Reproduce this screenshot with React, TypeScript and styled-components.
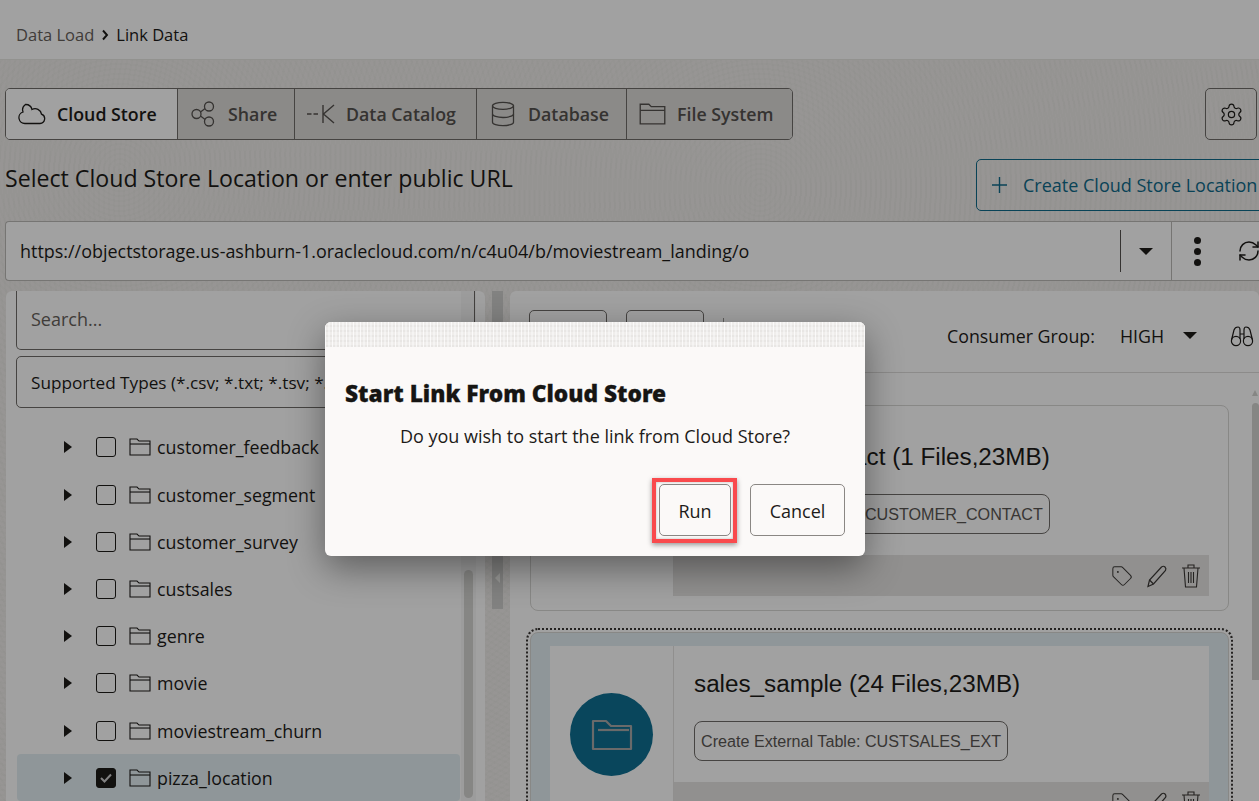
import styled, { createGlobalStyle } from 'styled-components';
import { Database, RefreshCw, Settings, Tag } from 'lucide-react';

const uiFont = '"Open Sans", "Noto Sans", "Liberation Sans", sans-serif';
const cardFont = '"Liberation Sans", Arial, sans-serif';
const teal = '#0f6a8a';

const folders = [
	'customer_feedback',
	'customer_segment',
	'customer_survey',
	'custsales',
	'genre',
	'movie',
	'moviestream_churn',
	'pizza_location',
];

const GlobalStyle = createGlobalStyle`
	html, body {
		margin: 0;
		height: 100%;
		overflow: hidden;
		font-family: ${uiFont};
		color: #1d1b19;
	}
	* {
		box-sizing: border-box;
	}
`;

const FolderGlyph = ({ size = 24 }: { size?: number }) => (
	<svg width={size} height={size * 0.82} viewBox='0 0 22 18' fill='none' stroke='currentColor' strokeWidth='1.1'>
		<path d='M1 1h7l2 2h11v14H1z' />
		<path d='M1 6h20' />
	</svg>
);

const CircleFolder = () => (
	<svg width='42' height='32' viewBox='0 0 42 32' fill='none' stroke='#a8a8a8' strokeWidth='2.2' strokeLinejoin='round'>
		<path d='M2 2h13l5 5h20v23H2z' />
		<path d='M7 11h31' />
	</svg>
);

const CardActions = () => (
	<ActionBar>
		<Tag size={22} strokeWidth={1.1} />
		<svg width='22' height='24' viewBox='0 0 22 24' fill='none' stroke='currentColor' strokeWidth='1.2'>
			<path d='M2 22.500 3.500 16 15.500 3q2-1.500 3.500 0t.5 3.500L7.500 20z' />
			<path d='M3.500 16l4 4' />
		</svg>
		<svg width='20' height='26' viewBox='0 0 20 26' fill='none' stroke='currentColor' strokeWidth='1.1'>
			<path d='M1 5h18M7 5V2h6v3M3 5l1.500 19h11L17 5M7.500 9v11M10 9v11M12.500 9v11' />
		</svg>
	</ActionBar>
);

const App = () => (
	<Page>
		<GlobalStyle />
		<Header>
			<Crumb>Data Load</Crumb>
			<svg width='8' height='12' viewBox='0 0 8 12' fill='none' stroke='#1d1b19' strokeWidth='1.9'>
				<path d='M2 1.500 6 6l-4 4.500' />
			</svg>
			<CrumbCurrent>Link Data</CrumbCurrent>
		</Header>

		<Toolbar>
			<Tabs>
				<Tab $active $width={171}>
					<svg width='28' height='22' viewBox='0 0 28 22' fill='none' stroke='currentColor' strokeWidth='1.3'>
						<path d='M7 20.500h15a4.800 4.800 0 0 0 1.500-9.300A6.500 6.500 0 0 0 14 6.500 6.500 6.500 0 0 0 7.500 1.500 6.500 6.500 0 0 0 5 9 5.900 5.900 0 0 0 7 20.500z' />
					</svg>
					Cloud Store
				</Tab>
				<Tab $width={117}>
					<svg width='27' height='26' viewBox='0 0 26 26' fill='none' stroke='currentColor' strokeWidth='1.3'>
						<circle cx='6' cy='13' r='4.500' />
						<circle cx='18.500' cy='5.500' r='4.500' />
						<circle cx='18.500' cy='20.500' r='4.500' />
						<path d='m10 11 4.600-3.400M10 15l4.600 3.400' />
					</svg>
					Share
				</Tab>
				<Tab $width={182}>
					<svg width='28' height='20' viewBox='0 0 28 20' fill='none' stroke='currentColor' strokeWidth='1.4'>
						<path d='M0 10h4.500M6.500 10h4.500M16 1v18M27 1 16.500 10 27 19' />
					</svg>
					Data Catalog
				</Tab>
				<Tab $width={150}>
					<Database size={28} strokeWidth={1.1} />
					Database
				</Tab>
				<Tab $width={166}>
					<FolderGlyph size={27} />
					File System
				</Tab>
			</Tabs>
			<IconButton>
				<Settings size={25} strokeWidth={1.15} />
			</IconButton>
		</Toolbar>

		<TitleRow>
			<Heading>Select Cloud Store Location or enter public URL</Heading>
			<CreateButton>
				<svg width='15' height='16' viewBox='0 0 15 16' stroke='currentColor' strokeWidth='1.4'>
					<path d='M7.500 0v16M0 8h15' />
				</svg>
				Create Cloud Store Location
			</CreateButton>
		</TitleRow>

		<UrlBar>
			<UrlText>https://objectstorage.us-ashburn-1.oraclecloud.com/n/c4u04/b/moviestream_landing/o</UrlText>
			<UrlCaretCell>
				<Caret />
			</UrlCaretCell>
			<UrlMenuCell>
				<Dots>
					<i />
					<i />
					<i />
				</Dots>
				<RefreshCw size={24} strokeWidth={1.5} />
			</UrlMenuCell>
		</UrlBar>

		<Panels>
			<LeftPanel>
				<SearchInput>Search...</SearchInput>
				<TypesInput>Supported Types (*.csv; *.txt; *.tsv; *.json; *.parquet)</TypesInput>
				<Tree>
					{folders.map((name, i) => (
						<TreeRow key={name} $selected={i === folders.length - 1}>
							<RowCaret />
							<Check $checked={i === folders.length - 1}>
								{i === folders.length - 1 && (
									<svg width='12' height='10' viewBox='0 0 12 10' fill='none' stroke='#cfcfcf' strokeWidth='2'>
										<path d='M1 5l3.500 3.500L11 1.500' />
									</svg>
								)}
							</Check>
							<FolderGlyph size={22} />
							<span>{name}</span>
						</TreeRow>
					))}
				</Tree>
				<TreeScroll>
					<TreeThumb />
				</TreeScroll>
			</LeftPanel>

			<Splitter>
				<SplitHandle>
					<SplitArrow />
				</SplitHandle>
			</Splitter>

			<RightPanel>
				<PanelBar>
					<GhostButton />
					<GhostButton />
					<BarDivider />
					<BarSpacer />
					<GroupLabel>Consumer Group:</GroupLabel>
					<GroupValue>HIGH</GroupValue>
					<Caret />
					<svg width='24' height='22' viewBox='0 0 24 22' fill='none' stroke='currentColor' strokeWidth='1.2'>
						<circle cx='6' cy='16' r='4.600' />
						<circle cx='18' cy='16' r='4.600' />
						<path d='M1.500 15 4 5q1-3 4-3 2 0 2 3v9M22.500 15 20 5q-1-3-4-3-2 0-2 3v9M10 9h4' />
					</svg>
				</PanelBar>
				<CardArea>
					<Cards>
						<Card>
							<CardInner>
								<CardIconCell>
									<Circle>
										<CircleFolder />
									</Circle>
								</CardIconCell>
								<CardBody>
									<CardTitle>customer_contact (1 Files,23MB)</CardTitle>
									<Chip>Create External Table: CUSTOMER_CONTACT</Chip>
									<CardActions />
								</CardBody>
							</CardInner>
						</Card>
						<Card $selected>
							<CardInner>
								<CardIconCell>
									<Circle>
										<CircleFolder />
									</Circle>
								</CardIconCell>
								<CardBody>
									<CardTitle>sales_sample (24 Files,23MB)</CardTitle>
									<Chip>Create External Table: CUSTSALES_EXT</Chip>
									<CardActions />
								</CardBody>
							</CardInner>
						</Card>
					</Cards>
					<CardScroll>
						<ScrollArrow />
						<CardThumb />
					</CardScroll>
				</CardArea>
			</RightPanel>
		</Panels>

		<Scrim />
		<Dialog>
			<DialogStrip />
			<DialogTitle>Start Link From Cloud Store</DialogTitle>
			<DialogText>Do you wish to start the link from Cloud Store?</DialogText>
			<DialogActions>
				<DialogButton $highlight>Run</DialogButton>
				<DialogButton $wide>Cancel</DialogButton>
			</DialogActions>
		</Dialog>
	</Page>
);

const Page = styled.div`
	position: relative;
	width: 1259px;
	height: 801px;
	overflow: hidden;
	background-color: #efedea;
	background-image:
		repeating-radial-gradient(circle at 760px 190px, rgba(0, 0, 0, 0.012) 0 2px, transparent 2px 5px),
		repeating-radial-gradient(circle at 120px 170px, rgba(0, 0, 0, 0.012) 0 2px, transparent 2px 5px);
`;

const Header = styled.header`
	display: flex;
	align-items: center;
	gap: 7px;
	height: 60px;
	padding: 10px 0 0 16px;
	background: #fff;
	border-bottom: 1px solid #e8e7e3;
	font-size: 16.500px;
`;

const Crumb = styled.span`
	color: #665f5b;
`;

const CrumbCurrent = styled.span`
	color: #1d1b19;
`;

const Toolbar = styled.div`
	display: flex;
	justify-content: space-between;
	margin-top: 28px;
	padding: 0 2px 0 5px;
`;

const Tabs = styled.div`
	display: flex;
	height: 52px;
	border: 1px solid #6f6c69;
	border-radius: 5px;
	overflow: hidden;
`;

const Tab = styled.div<{ $active?: boolean; $width: number }>`
	display: flex;
	align-items: center;
	gap: 11px;
	width: ${props => props.$width}px;
	padding-left: 12px;
	background: ${props => (props.$active ? '#fff' : '#dcdbd8')};
	color: ${props => (props.$active ? '#1d1b19' : '#55514e')};
	font-size: 17.800px;
	font-weight: 600;
	border-left: ${props => (props.$active ? 'none' : '1px solid #6f6c69')};
`;

const IconButton = styled.div`
	display: flex;
	align-items: center;
	justify-content: center;
	width: 52px;
	height: 52px;
	border: 1px solid #6f6c69;
	border-radius: 5px;
`;

const TitleRow = styled.div`
	display: flex;
	margin-top: 19px;
	padding-left: 5px;
`;

const Heading = styled.h1`
	flex: 0 0 971px;
	margin: 2px 0 0;
	font-size: 23.150px;
	line-height: 34px;
	font-weight: 400;
`;

const CreateButton = styled.div`
	flex: none;
	display: flex;
	align-items: center;
	gap: 16px;
	width: 300px;
	height: 52px;
	padding-left: 15px;
	border: 1px solid ${teal};
	border-radius: 5px;
	color: ${teal};
	font-size: 18px;
	white-space: nowrap;
`;

const UrlBar = styled.div`
	display: flex;
	height: 60px;
	margin: 10px 0 0 5px;
	background: #fff;
	border: 1px solid #bbb9b6;
	border-right: none;
	border-radius: 4px 0 0 4px;
`;

const UrlText = styled.div`
	flex: 0 0 1114px;
	align-self: center;
	padding-left: 14px;
	font-size: 17.960px;
	white-space: nowrap;
`;

const UrlCaretCell = styled.div`
	flex: 0 0 51px;
	display: flex;
	align-items: center;
	justify-content: center;
	height: 42px;
	margin-top: 8px;
	border-left: 1px solid #55514e;
`;

const UrlMenuCell = styled.div`
	flex: none;
	display: flex;
	align-items: center;
	gap: 36px;
	width: 100px;
	padding-left: 22px;
	border-left: 1px solid #bbb9b6;
`;

const Dots = styled.div`
	display: flex;
	flex-direction: column;
	gap: 4px;
	& > i {
		width: 7px;
		height: 7px;
		border-radius: 50%;
		background: #1d1b19;
	}
`;

const Caret = styled.span`
	width: 0;
	height: 0;
	border-left: 7px solid transparent;
	border-right: 7px solid transparent;
	border-top: 7px solid #1d1b19;
`;

const Panels = styled.div`
	display: flex;
	height: 520px;
	margin: 10px 0 0 6px;
`;

const LeftPanel = styled.section`
	position: relative;
	flex: 0 0 479px;
	padding: 0 10px;
	background: #fff;
	border-radius: 6px 6px 0 0;
`;

const SearchInput = styled.div`
	display: flex;
	align-items: center;
	height: 59px;
	padding: 0 0 2px 14px;
	border: 1px solid #6f6c69;
	border-top: none;
	border-radius: 0 0 5px 5px;
	color: #665f5b;
	font-size: 18px;
`;

const TypesInput = styled.div`
	display: flex;
	align-items: center;
	height: 52px;
	margin-top: 6px;
	padding-left: 14px;
	border: 1px solid #6f6c69;
	border-radius: 5px;
	font-size: 17.200px;
	white-space: nowrap;
	overflow: hidden;
`;

const Tree = styled.div`
	width: 443px;
	margin: 15.800px 0 0 1px;
`;

const TreeRow = styled.div<{ $selected?: boolean }>`
	display: flex;
	align-items: center;
	height: 47.200px;
	padding-left: 47px;
	background: ${props => (props.$selected ? '#e3eef2' : 'transparent')};
	border-radius: 4px;
	font-size: 17.800px;
	& > span:last-child {
		margin-left: 6px;
	}
`;

const RowCaret = styled.span`
	width: 0;
	height: 0;
	border-top: 6px solid transparent;
	border-bottom: 6px solid transparent;
	border-left: 8px solid #1d1b19;
`;

const Check = styled.span<{ $checked?: boolean }>`
	display: flex;
	align-items: center;
	justify-content: center;
	width: 20px;
	height: 20px;
	margin: 0 13px 0 24px;
	border: 1.500px solid #1d1b19;
	border-radius: 3px;
	background: ${props => (props.$checked ? '#1d1b19' : 'transparent')};
`;

const TreeScroll = styled.div`
	position: absolute;
	top: 0;
	right: 9px;
	bottom: 0;
	width: 15px;
	background: rgba(0, 0, 0, 0.03);
`;

const TreeThumb = styled.div`
	width: 9px;
	height: 228px;
	margin: 279px 0 0 3px;
	border-radius: 5px;
	background: #d5d4d2;
`;

const Splitter = styled.div`
	flex: 0 0 25px;
	display: flex;
	justify-content: center;
`;

const SplitHandle = styled.div`
	display: flex;
	align-items: flex-end;
	justify-content: center;
	width: 11px;
	height: 318px;
	padding-bottom: 26px;
	background: #cfcecc;
`;

const SplitArrow = styled.span`
	width: 0;
	height: 0;
	border-top: 5px solid transparent;
	border-bottom: 5px solid transparent;
	border-right: 5px solid #f0efed;
`;

const RightPanel = styled.section`
	flex: 1;
	display: flex;
	flex-direction: column;
	background: #fff;
	border-radius: 6px 6px 0 0;
`;

const PanelBar = styled.div`
	flex: none;
	display: flex;
	align-items: center;
	gap: 19px;
	height: 82px;
	padding: 8px 5px 0 19px;
	border-bottom: 1px solid #dedddb;
	font-size: 17.800px;
	& > svg {
		margin-left: 14px;
	}
`;

const GhostButton = styled.div`
	align-self: flex-start;
	width: 78px;
	height: 44px;
	margin-top: 11px;
	border: 1px solid #6f6c69;
	border-radius: 5px;
`;

const BarDivider = styled.div`
	align-self: flex-start;
	width: 1px;
	height: 30px;
	margin-top: 19px;
	background: #9a9895;
`;

const BarSpacer = styled.div`
	flex: 1;
`;

const GroupLabel = styled.span``;

const GroupValue = styled.span`
	margin-left: 6px;
`;

const CardArea = styled.div`
	flex: none;
	display: flex;
	justify-content: space-between;
	padding: 32px 0 0 20px;
`;

const Cards = styled.div`
	display: flex;
	flex-direction: column;
	gap: 21px;
	width: 699px;
`;

const Card = styled.article<{ $selected?: boolean }>`
	padding: 13px 19px 14px;
	background: ${props => (props.$selected ? '#e3eef2' : '#fff')};
	border: 1px solid #d8d7d4;
	border-radius: 8px;
	outline: ${props => (props.$selected ? '2px dotted #3a3735' : 'none')};
	outline-offset: 2px;
`;

const CardInner = styled.div`
	display: grid;
	grid-template-columns: 124px 1fr;
	background: #fff;
`;

const CardIconCell = styled.div`
	display: flex;
	align-items: center;
	justify-content: center;
	border-right: 1px solid #e4e3e1;
`;

const Circle = styled.div`
	display: flex;
	align-items: center;
	justify-content: center;
	width: 83px;
	height: 83px;
	border-radius: 50%;
	background: #0f6f92;
`;

const CardBody = styled.div`
	padding-top: 24px;
`;

const CardTitle = styled.h2`
	margin: 0 0 23px 20px;
	font-family: ${cardFont};
	font-size: 24.250px;
	line-height: 28px;
	font-weight: 400;
`;

const Chip = styled.div`
	width: fit-content;
	height: 40px;
	margin-left: 20px;
	padding: 0 6px;
	border: 1px solid #6f6c69;
	border-radius: 8px;
	color: #5a5653;
	font-family: ${cardFont};
	font-size: 16.150px;
	line-height: 38px;
`;

const ActionBar = styled.div`
	display: flex;
	align-items: center;
	justify-content: flex-end;
	gap: 13px;
	height: 41px;
	margin-top: 21px;
	padding-right: 8px;
	background: #e6e5e3;
	color: #3a3735;
`;

const CardScroll = styled.div`
	flex: 0 0 7px;
	margin-top: -15px;
`;

const ScrollArrow = styled.div`
	width: 0;
	height: 0;
	margin-bottom: 7px;
	border-left: 3.500px solid transparent;
	border-right: 3.500px solid transparent;
	border-bottom: 6px solid #d5d4d2;
`;

const CardThumb = styled.div`
	height: 277px;
	background: #d5d4d2;
	border-radius: 4px 4px 0 0;
`;

const Scrim = styled.div`
	position: absolute;
	inset: 0;
	background: rgba(0, 0, 0, 0.37);
`;

const Dialog = styled.div`
	position: absolute;
	left: 325px;
	top: 322px;
	width: 540px;
	height: 234px;
	background: #fbf9f8;
	border-radius: 6px;
	box-shadow: 0 12px 36px rgba(0, 0, 0, 0.42);
	overflow: hidden;
`;

const DialogStrip = styled.div`
	height: 25px;
	background-color: #efedeb;
	background-image:
		repeating-linear-gradient(90deg, rgba(255, 255, 255, 0.75) 0 1px, transparent 1px 3px, rgba(255, 255, 255, 0.4) 3px 5px, transparent 5px 7px),
		repeating-linear-gradient(0deg, rgba(0, 0, 0, 0.03) 0 2px, transparent 2px 5px);
`;

const DialogTitle = styled.h3`
	margin: 31px 0 0 20px;
	font-family: 'Noto Sans', ${uiFont};
	font-size: 22.700px;
	line-height: 32px;
	font-weight: 900;
	color: #161513;
	-webkit-text-stroke: 0.3px #161513;
`;

const DialogText = styled.p`
	margin: 13px 0 0;
	text-align: center;
	font-size: 18px;
	line-height: 26px;
`;

const DialogActions = styled.div`
	display: flex;
	justify-content: flex-end;
	gap: 19px;
	margin-top: 35px;
	padding-right: 20px;
`;

const DialogButton = styled.div<{ $wide?: boolean; $highlight?: boolean }>`
	position: relative;
	display: flex;
	align-items: center;
	justify-content: center;
	width: ${props => (props.$wide ? '95px' : '72px')};
	height: 52px;
	padding-top: 2px;
	border: 1px solid #8a8784;
	border-radius: 5px;
	font-size: 18px;
	${props =>
		props.$highlight &&
		`
		&::after {
			content: '';
			position: absolute;
			inset: -7px -7px -8px -8px;
			border: 4px solid #f94a4d;
			box-shadow: 0 2px 5px rgba(0, 0, 0, 0.4), inset 0 0 3px rgba(0, 0, 0, 0.25);
		}
	`}
`;

export default App;
